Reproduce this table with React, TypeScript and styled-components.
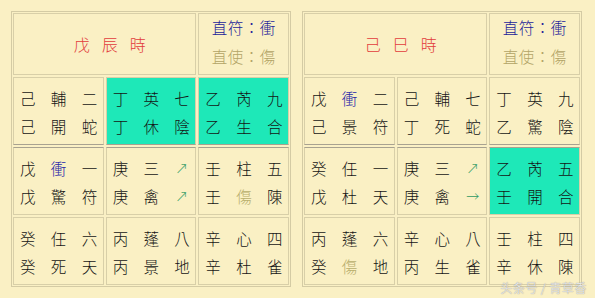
import React from 'react';
import styled, { createGlobalStyle } from 'styled-components';

type Tone = 'ink' | 'blue' | 'olive' | 'green';

type Palace = {
  lines: [string, string];
  lit?: boolean;
};

type Chart = {
  hour: string;
  palaces: Palace[];
};

// token prefixes: b = blue, o = olive, g = green arrow
const CHARTS: Chart[] = [
  {
    hour: '戊辰時',
    palaces: [
      { lines: ['己 輔 二', '己 開 蛇'] },
      { lines: ['丁 英 七', '丁 休 陰'], lit: true },
      { lines: ['乙 芮 九', '乙 生 合'], lit: true },
      { lines: ['戊 b衝 一', '戊 驚 符'] },
      { lines: ['庚 三 g↗', '庚 禽 g↗'] },
      { lines: ['壬 柱 五', '壬 o傷 陳'] },
      { lines: ['癸 任 六', '癸 死 天'] },
      { lines: ['丙 蓬 八', '丙 景 地'] },
      { lines: ['辛 心 四', '辛 杜 雀'] },
    ],
  },
  {
    hour: '己巳時',
    palaces: [
      { lines: ['戊 b衝 二', '己 景 符'] },
      { lines: ['己 輔 七', '丁 死 蛇'] },
      { lines: ['丁 英 九', '乙 驚 陰'] },
      { lines: ['癸 任 一', '戊 杜 天'] },
      { lines: ['庚 三 g↗', '庚 禽 g→'] },
      { lines: ['乙 芮 五', '壬 開 合'], lit: true },
      { lines: ['丙 蓬 六', '癸 o傷 地'] },
      { lines: ['辛 心 八', '丙 生 雀'] },
      { lines: ['壬 柱 四', '辛 休 陳'] },
    ],
  },
];

const toneOf = (token: string): { tone: Tone; text: string } => {
  const p = token[0];
  if (p === 'b') return { tone: 'blue', text: token.slice(1) };
  if (p === 'o') return { tone: 'olive', text: token.slice(1) };
  if (p === 'g') return { tone: 'green', text: token.slice(1) };
  return { tone: 'ink', text: token };
};

const GlobalStyle = createGlobalStyle`
  html, body {
    margin: 0;
    padding: 0;
    background: #faf0c4;
  }
  body {
    font-family: "Noto Sans CJK TC", "Noto Sans CJK SC", sans-serif;
    font-weight: 300;
  }
`;

const Page = styled.div`
  position: relative;
  width: 595px;
  height: 298px;
  box-sizing: border-box;
  padding: 11px 0 0 11px;
  display: flex;
  gap: 11px;
  background: #faf0c4;
  overflow: hidden;
`;

const Board = styled.div`
  width: 280px;
  box-sizing: border-box;
  border: 1px solid #d4cba4;
  padding: 1px;
  display: grid;
  grid-template-columns: repeat(3, 1fr);
  grid-template-rows: 62px repeat(3, 68px);
  gap: 2px;
  align-self: flex-start;
`;

const Cell = styled.div<{ $lit?: boolean; $row?: number }>`
  box-sizing: border-box;
  border: 1px solid #d8cfa8;
  border-top-color: ${({ $row }) => ($row === 1 ? '#a8a290' : '#d8cfa8')};
  border-bottom-color: ${({ $row }) => ($row === 0 ? '#a8a290' : '#d8cfa8')};
  background: ${({ $lit }) => ($lit ? '#1ee8b8' : 'transparent')};
`;

const HourCell = styled(Cell)`
  grid-column: span 2;
  display: flex;
  align-items: center;
  justify-content: center;
  gap: 12px;
  padding-left: 10px;
  color: #e23c3c;
  font-size: 16px;
`;

const StarCell = styled(Cell)`
  display: flex;
  flex-direction: column;
  align-items: center;
  justify-content: center;
  padding-bottom: 4px;
  font-size: 15.5px;
  line-height: 29px;
`;

const StarLine = styled.div<{ $tone: Tone }>`
  color: ${({ $tone }) => ($tone === 'blue' ? '#1c1c9a' : '#b2a466')};
  letter-spacing: 0.5px;
`;

const Palace = styled(Cell)`
  display: flex;
  flex-direction: column;
  justify-content: center;
  padding: 1px 6px 0 6px;
`;

const Line = styled.div`
  display: flex;
  justify-content: space-between;
  align-items: center;
  height: 28px;
`;

const Glyph = styled.span<{ $tone: Tone }>`
  width: 15px;
  text-align: center;
  font-size: ${({ $tone }) => ($tone === 'green' ? '13px' : '15.5px')};
  color: ${({ $tone }) =>
    $tone === 'blue'
      ? '#2626a8'
      : $tone === 'olive'
        ? '#b8ae6c'
        : $tone === 'green'
          ? '#2f9a64'
          : '#141414'};
`;

const Watermark = styled.div`
  position: absolute;
  right: 8px;
  bottom: 2px;
  font-family: "Noto Sans CJK SC", sans-serif;
  font-size: 12px;
  color: rgba(255, 255, 255, 0.85);
  text-shadow: 0 0 1px #9a9a9a, 0 0 1px #9a9a9a;
  letter-spacing: 0.5px;
`;

function ChartBoard({ chart }: { chart: Chart }) {
  return (
    <Board>
      <HourCell>
        {chart.hour.split('').map((c, i) => (
          <span key={i}>{c}</span>
        ))}
      </HourCell>
      <StarCell>
        <StarLine $tone="blue">直符：衝</StarLine>
        <StarLine $tone="olive">直使：傷</StarLine>
      </StarCell>
      {chart.palaces.map((p, i) => (
        <Palace key={i} $lit={p.lit} $row={Math.floor(i / 3)}>
          {p.lines.map((line, j) => (
            <Line key={j}>
              {line.split(' ').map((tok, k) => {
                const { tone, text } = toneOf(tok);
                return (
                  <Glyph key={k} $tone={tone}>
                    {text}
                  </Glyph>
                );
              })}
            </Line>
          ))}
        </Palace>
      ))}
    </Board>
  );
}

export default function App() {
  return (
    <>
      <GlobalStyle />
      <Page>
        {CHARTS.map((c) => (
          <ChartBoard key={c.hour} chart={c} />
        ))}
        <Watermark>头条号 / 青草香</Watermark>
      </Page>
    </>
  );
}
